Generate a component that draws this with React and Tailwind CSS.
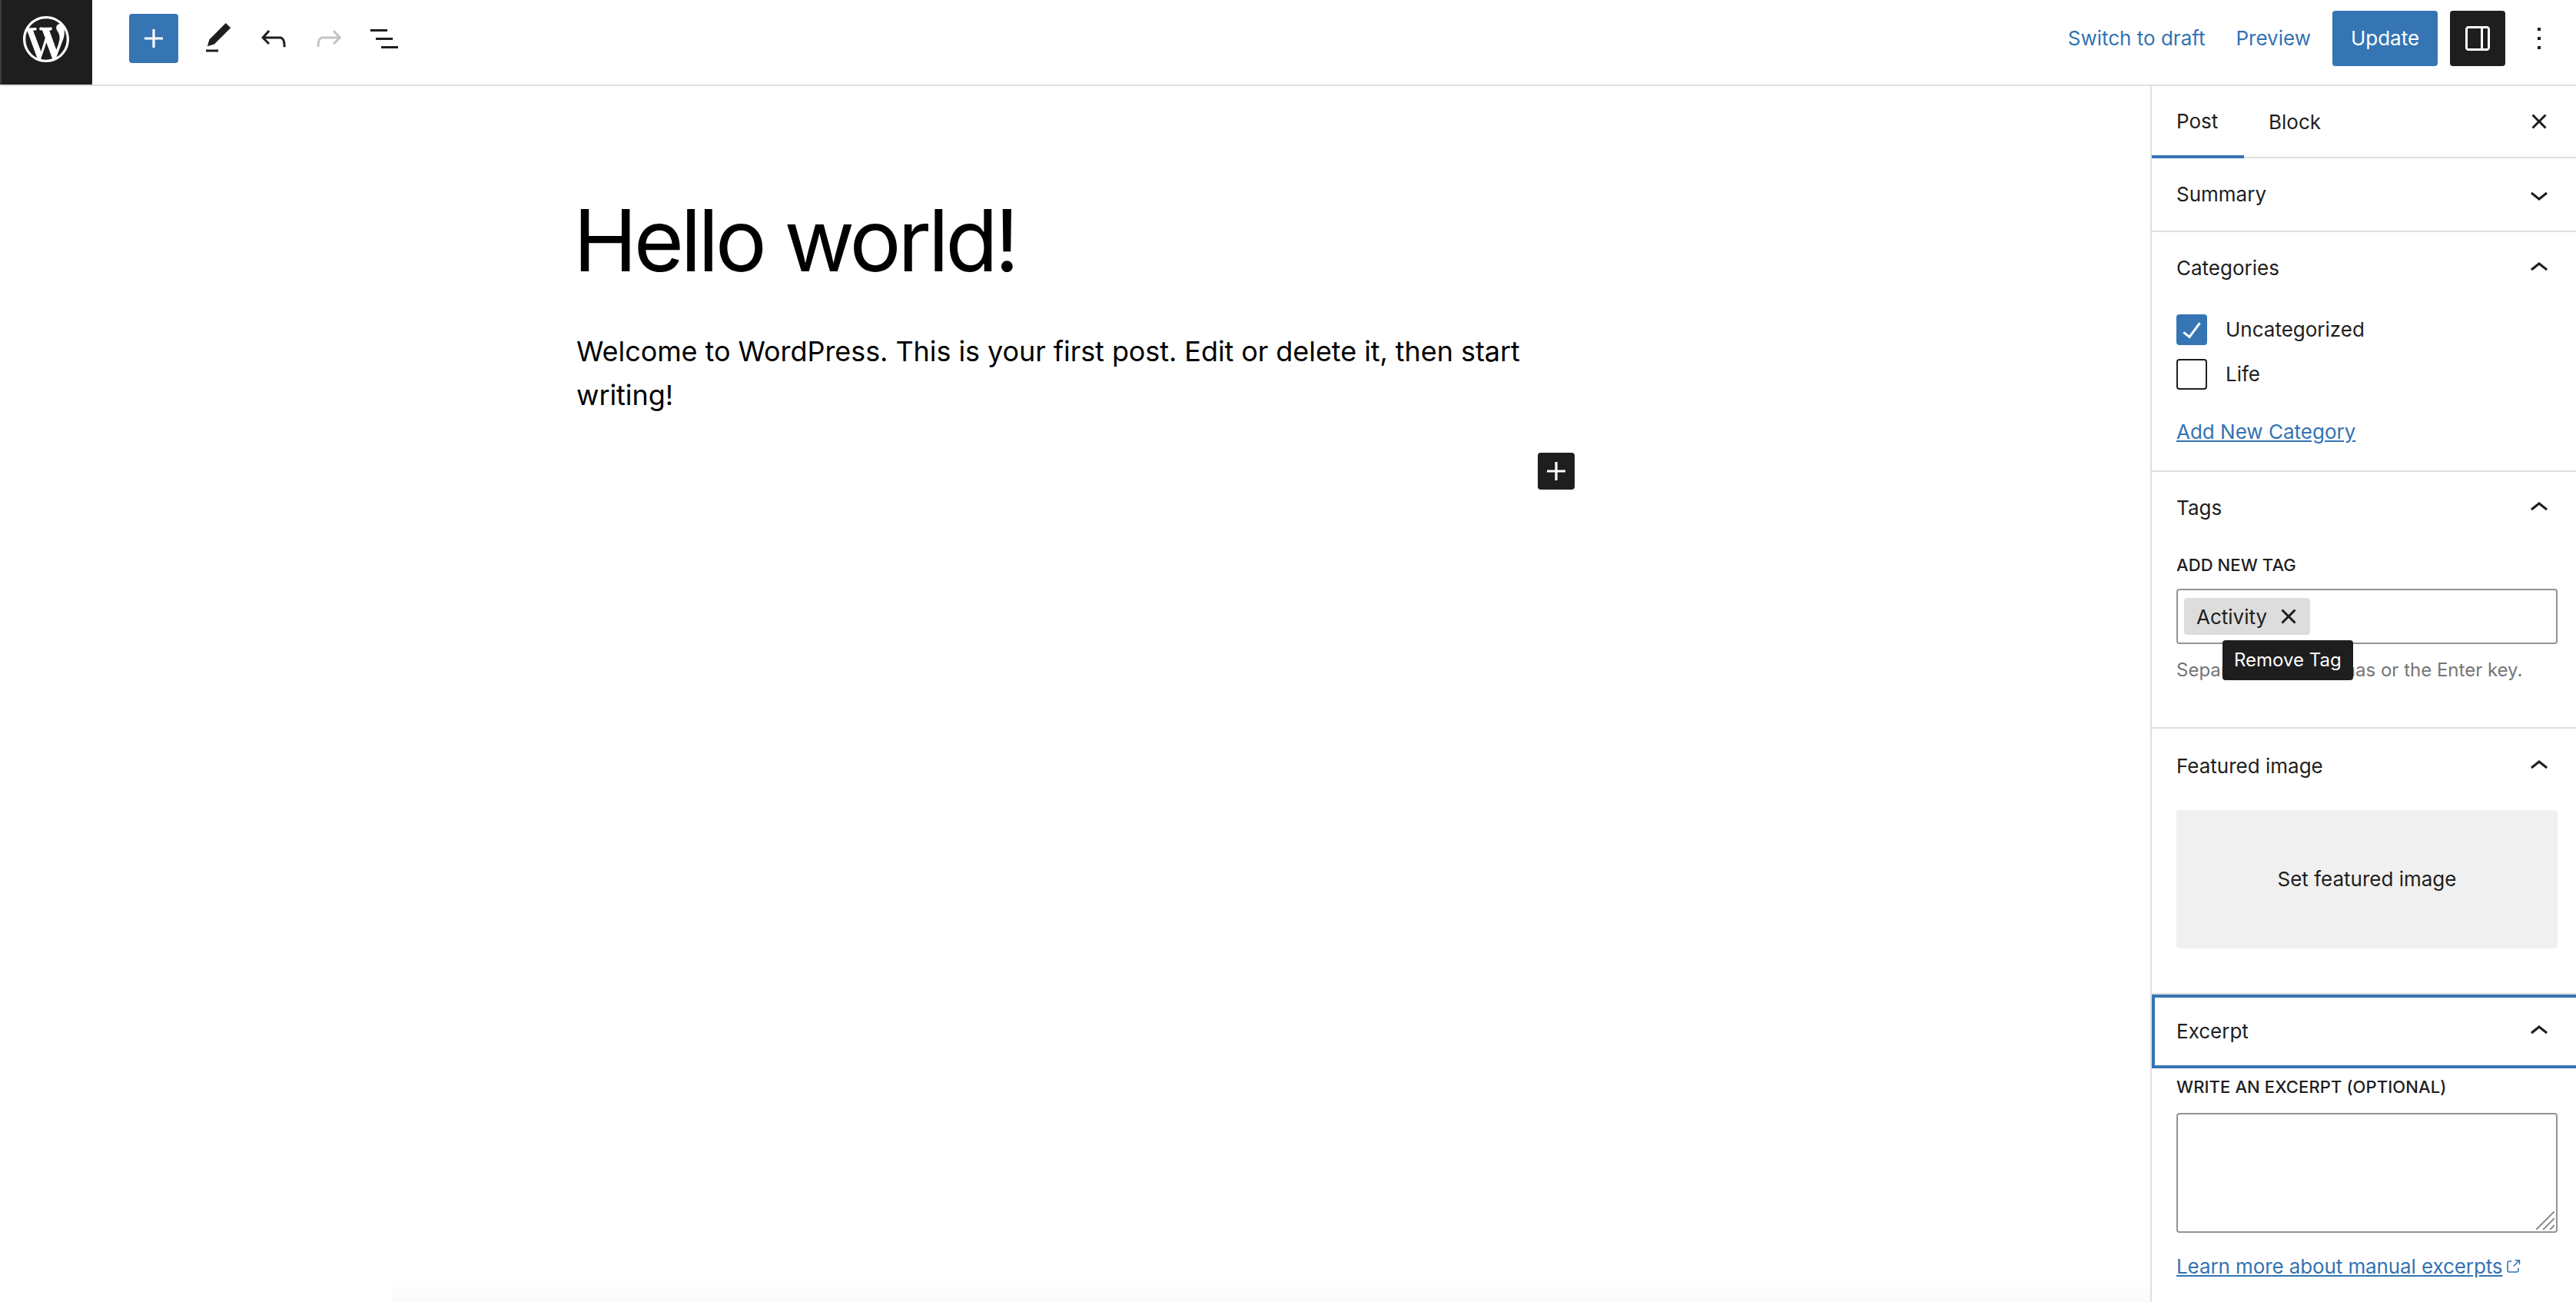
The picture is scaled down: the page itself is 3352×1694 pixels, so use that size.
const paths = {
  plus: "M18 11.2h-5.2V6h-1.6v5.2H6v1.6h5.2V18h1.6v-5.2H18z",
  edit: "M20.1 5.1L16.9 2 6.2 12.7l-1.3 4.4 4.5-1.3L20.1 5.1zM4 20.8h8v-1.5H4v1.5z",
  undo: "M18.3 11.7c-.6-.6-1.4-.9-2.3-.9H6.7l2.9-3.3-1.1-1-4.5 5L8.5 16l1-1-2.7-2.7H16c.5 0 .9.2 1.3.5 1 1 1 3.4 1 4.5v.3h1.5v-.2c0-1.5 0-4.3-1.5-5.7z",
  redo: "M15.6 6.5l-1.1 1 2.9 3.3H8c-.9 0-1.7.3-2.3.9-1.4 1.5-1.4 4.2-1.4 5.6v.2h1.5v-.3c0-1.1 0-3.5 1-4.5.3-.3.7-.5 1.3-.5h9.2L14.5 15l1.1 1.1 4.6-4.6-4.6-5z",
  list: "M3 6h11v1.5H3V6Zm3.5 5.5h11V13h-11v-1.5ZM21 17H10v1.5h11V17Z",
  drawer: "M18 4H6c-1.1 0-2 .9-2 2v12c0 1.1.9 2 2 2h12c1.1 0 2-.9 2-2V6c0-1.1-.9-2-2-2zm-4 14.5H6c-.3 0-.5-.2-.5-.5V6c0-.3.2-.5.5-.5h8v13zm4.5-.5c0 .3-.2.5-.5.5h-2.5v-13H18c.3 0 .5.2.5.5v12z",
  more: "M13 19h-2v-2h2v2zm0-6h-2v-2h2v2zm0-6h-2V5h2v2z",
  up: "M6.5 12.4L12 8l5.5 4.4-.9 1.2L12 10l-4.5 3.6-1-1.2z",
  down: "M17.5 11.6L12 16l-5.5-4.4.9-1.2L12 14l4.5-3.6 1 1.2z",
  external: "M18.2 17c0 .7-.6 1.2-1.2 1.2H7c-.7 0-1.2-.6-1.2-1.2V7c0-.7.6-1.2 1.2-1.2h3.2V4.2H7C5.5 4.2 4.2 5.5 4.2 7v10c0 1.5 1.2 2.8 2.8 2.8h10c1.5 0 2.8-1.2 2.8-2.8v-3.6h-1.5V17zM14.9 3v1.5h3.7l-6.4 6.4 1.1 1.1 6.4-6.4v3.7h1.5V3h-6.8z",
  check: "M16.7 7.1l-6.3 8.5-3.3-2.5-.9 1.2 4.5 3.4L17.9 8z",
  smallClose: "M12 13.06l3.712 3.713 1.061-1.06L13.061 12l3.712-3.712-1.06-1.06L12 10.938 8.288 7.227l-1.061 1.06L10.939 12l-3.712 3.712 1.06 1.061L12 13.061z",
};

function Icon({ name, className = "w-12 h-12" }) {
  return (
    <svg viewBox="0 0 24 24" className={`${className} fill-current shrink-0`}>
      <path d={paths[name]} />
    </svg>
  );
}

function WpLogo() {
  return (
    <svg viewBox="0 0 20 20" className="w-[60px] h-[60px] -ml-[2px] fill-current">
      <path d="M20 10c0-5.51-4.49-10-10-10C4.48 0 0 4.49 0 10c0 5.52 4.48 10 10 10 5.51 0 10-4.48 10-10zM7.78 15.37L4.37 6.22c.55-.02 1.17-.08 1.17-.08.5-.06.44-1.13-.06-1.11 0 0-1.45.11-2.37.11-.18 0-.37 0-.58-.01C4.12 2.69 6.87 1.11 10 1.11c2.33 0 4.45.87 6.05 2.34-.68-.11-1.65.39-1.65 1.58 0 .74.45 1.36.9 2.1.35.61.55 1.36.55 2.46 0 1.49-1.4 5-1.4 5l-3.03-8.37c.54-.02.82-.17.82-.17.5-.05.44-1.25-.06-1.22 0 0-1.44.12-2.38.12-.87 0-2.33-.12-2.33-.12-.5-.03-.56 1.2-.06 1.22l.92.08 1.26 3.41zM17.41 10c.24-.64.74-1.87.43-4.25.7 1.29 1.05 2.71 1.05 4.25 0 3.29-1.73 6.24-4.4 7.78.97-2.59 1.94-5.2 2.92-7.78zM6.1 18.09C3.12 16.65 1.11 13.53 1.11 10c0-1.3.23-2.48.72-3.59C3.25 10.3 4.67 14.2 6.1 18.09zm4.03-6.63l2.58 6.98c-.86.29-1.76.45-2.71.45-.79 0-1.57-.11-2.29-.33.81-2.38 1.62-4.74 2.42-7.1z" />
    </svg>
  );
}

function PanelHeader({ title, open = true }) {
  return (
    <div className="h-[94px] pl-8 pr-6 flex items-center justify-between">
      <span>{title}</span>
      <Icon name={open ? "up" : "down"} />
    </div>
  );
}

export default function App() {
  return (
    <div className="w-[3352px] h-[1694px] overflow-hidden flex flex-col bg-white text-[#1e1e1e] text-[26px] leading-[36px] font-['Inter',sans-serif]">
      {/* TOP BAR */}
      <header className="h-[112px] shrink-0 border-b-2 border-[#e0e0e0] flex items-start">
        <div className="w-[120px] h-[110px] pb-2 bg-[#1e1e1e] border-l-2 border-[#3c3c3c] flex items-center justify-center text-white">
          <WpLogo />
        </div>
        <div className="h-[100px] flex-1 flex items-center">
          <button className="ml-[48px] w-[64px] h-[64px] rounded-[4px] bg-[#3575b4] text-white flex items-center justify-center">
            <Icon name="plus" />
          </button>
          <div className="ml-[28px]"><Icon name="edit" /></div>
          <div className="ml-[24px]"><Icon name="undo" /></div>
          <div className="ml-[24px] text-[#c4c4c4]"><Icon name="redo" /></div>
          <div className="ml-[24px]"><Icon name="list" /></div>

          <div className="ml-auto flex items-center text-[#3373b3]">
            <span>Switch to draft</span>
            <span className="ml-[40px]">Preview</span>
            <button className="ml-[28px] h-[72px] w-[137px] rounded-[4px] bg-[#3575b4] text-white">Update</button>
            <div className="ml-[16px] w-[72px] h-[72px] rounded-[4px] bg-[#1e1e1e] text-white flex items-center justify-center">
              <Icon name="drawer" />
            </div>
            <div className="ml-[20px] mr-6 text-[#1e1e1e]"><Icon name="more" /></div>
          </div>
        </div>
      </header>

      <div className="flex-1 flex min-h-0">
        {/* EDITOR */}
        <main className="relative flex-1 pl-[750px] pt-[139px] text-black">
          <h1 className="text-[112px] leading-[1.1] tracking-[-4.5px] font-normal w-[1300px] -ml-[4px]">Hello world!</h1>
          <p className="mt-[55px] w-[1300px] text-[36px] leading-[57px] tracking-[-0.07px]">
            Welcome to WordPress. This is your first post. Edit or delete it, then start writing!
          </p>
          <div className="mt-[46px] ml-[1251px] w-[48px] h-[48px] rounded-[4px] bg-[#1e1e1e] text-white flex items-center justify-center">
            <Icon name="plus" />
          </div>
          <div className="absolute left-[510px] right-0 bottom-0 h-[34px] bg-gradient-to-b from-white to-[#fbfbfb]" />
        </main>

        {/* SIDEBAR */}
        <aside className="w-[554px] shrink-0 border-l-2 border-[#e0e0e0]">
          <div className="h-[94px] border-b-2 border-[#e0e0e0] flex items-stretch">
            <div className="w-[120px] pl-8 pt-[2px] flex items-center border-b-[4px] -mb-[2px] border-[#3575b4]">Post</div>
            <div className="pl-[32px] pt-[2px] flex items-center">Block</div>
            <div className="ml-auto pr-6 flex items-center"><Icon name="smallClose" /></div>
          </div>

          <section className="border-b-2 border-[#e0e0e0]">
            <PanelHeader title="Summary" open={false} />
          </section>

          <section className="border-b-2 border-[#e0e0e0] h-[312px]">
            <PanelHeader title="Categories" />
            <div className="pl-8 flex items-center gap-[24px] h-[40px] mt-[13px]">
              <div className="w-10 h-10 rounded-[4px] bg-[#3575b4] text-white flex items-center justify-center">
                <Icon name="check" />
              </div>
              <span>Uncategorized</span>
            </div>
            <div className="pl-8 flex items-center gap-[24px] h-[40px] mt-[18px]">
              <div className="w-10 h-10 rounded-[4px] border-2 border-[#1e1e1e]" />
              <span>Life</span>
            </div>
            <a className="block ml-8 mt-[37px] text-[#3373b3] underline">Add New Category</a>
          </section>

          <section className="border-b-2 border-[#e0e0e0] h-[334px]">
            <PanelHeader title="Tags" />
            <div className="ml-8 mr-6 relative pt-[11px]">
              <div className="text-[22px] leading-[32px] font-[450] tracking-[0.1px]">ADD NEW TAG</div>
              <div className="mt-[15px] h-[72px] rounded-[4px] border-2 border-[#949494] flex items-center pl-2">
                <div className="h-[48px] w-[164px] rounded-[4px] bg-[#dddddd] flex items-center pl-4 gap-[4px]">
                  <span className="pt-[2px]">Activity</span>
                  <Icon name="smallClose" className="w-12 h-12 -mr-2" />
                </div>
              </div>
              <p className="mt-[16px] text-[24px] leading-[36px] text-[#757575]">Separate with commas or the Enter key.</p>
              <div className="absolute left-[60px] top-[125px] h-[52px] px-[15px] rounded-[4px] bg-[#1e1e1e] text-white text-[24px] flex items-center">Remove Tag</div>
            </div>
          </section>

          <section className="border-b-2 border-[#e0e0e0] h-[346px]">
            <div className="pt-[2px]"><PanelHeader title="Featured image" /></div>
            <div className="ml-8 mr-6 mt-[10px] h-[180px] rounded-[4px] bg-[#f0f0f0] flex items-center justify-center">Set featured image</div>
          </section>

          <section>
            <div className="border-y-4 border-l-4 border-[#3575b4] h-[96px] pl-[28px] pr-6 flex items-center justify-between">
              <span>Excerpt</span>
              <Icon name="up" />
            </div>
            <div className="ml-8 mr-6 mt-[8px]">
              <div className="text-[22px] leading-[32px] font-[450] tracking-[0.1px]">WRITE AN EXCERPT (OPTIONAL)</div>
              <div className="relative mt-[18px] h-[156px]">
                <textarea className="block w-full h-full resize-none rounded-[4px] border-2 border-[#949494] bg-white" />
                <svg viewBox="0 0 24 24" className="absolute right-[4px] bottom-[4px] w-[24px] h-[24px] stroke-[#8c8c8c] fill-none" strokeWidth="2">
                  <path d="M0 24 24 0M9 24 24 9M18 24l6-6" />
                </svg>
              </div>
              <a className="mt-[26px] flex items-center text-[#3373b3]">
                <span className="underline tracking-[-0.1px]">Learn more about manual excerpts</span>
                <Icon name="external" className="w-6 h-6 ml-[2px]" />
              </a>
            </div>
          </section>
        </aside>
      </div>
    </div>
  );
}
